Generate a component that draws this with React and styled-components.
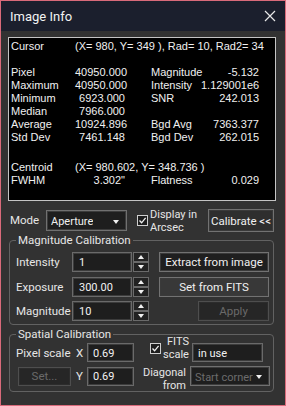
import React from 'react';
import styled, { createGlobalStyle } from 'styled-components';

const GlobalStyle = createGlobalStyle`
  html, body {
    margin: 0;
    padding: 0;
    background: #323232;
  }
  * {
    box-sizing: border-box;
  }
`;

const Check = () => (
  <svg width="9" height="9" viewBox="0 0 9 9">
    <path d="M1.5 4.5 L3.6 6.8 L7.6 1.8" fill="none" stroke="#f0f0f0" strokeWidth="1.3" />
  </svg>
);

const Arrow = ({ up, color = '#f0f0f0' }) => (
  <svg width="6" height="4" viewBox="0 0 6 4">
    <polygon points={up ? '0,4 6,4 3,0' : '0,0 6,0 3,4'} fill={color} />
  </svg>
);

const SpinBox = ({ value }) => (
  <>
    <NumInput>{value}</NumInput>
    <Spin>
      <SpinHalf><Arrow up /></SpinHalf>
      <SpinHalf><Arrow /></SpinHalf>
    </Spin>
  </>
);

const stats = [
  ['Pixel', '40950.000', 'Magnitude', '-5.132'],
  ['Maximum', '40950.000', 'Intensity', '1.129001e6'],
  ['Minimum', '6923.000', 'SNR', '242.013'],
  ['Median', '7966.000', '', ''],
  ['Average', '10924.896', 'Bgd Avg', '7363.377'],
  ['Std Dev', '7461.148', 'Bgd Dev', '262.015'],
];

const App = () => {
  return (
    <>
      <GlobalStyle />
      <Window>
        <TitleBar>
          <span>Image Info</span>
          <svg width="12" height="12" viewBox="0 0 12 12">
            <path d="M1 1 L11 11 M11 1 L1 11" stroke="#e8e8e8" strokeWidth="1.2" />
          </svg>
        </TitleBar>

        <Content>
          <InfoPanel>
            <InfoRow>
              <InfoLabel>Cursor</InfoLabel>
              <span>(X= 980, Y= 349 ), Rad= 10, Rad2= 34</span>
            </InfoRow>
            <InfoRow />
            {stats.map(([l1, v1, l2, v2]) => (
              <InfoRow key={l1}>
                <InfoLabel>{l1}</InfoLabel>
                <InfoValue>{v1}</InfoValue>
                <InfoLabel $second>{l2}</InfoLabel>
                <InfoValue $wide>{v2}</InfoValue>
              </InfoRow>
            ))}
            <InfoGap />
            <InfoRow>
              <InfoLabel>Centroid</InfoLabel>
              <span>(X= 980.602, Y= 348.736 )</span>
            </InfoRow>
            <InfoRow>
              <InfoLabel>FWHM</InfoLabel>
              <InfoValue>3.302"</InfoValue>
              <InfoLabel $second>Flatness</InfoLabel>
              <InfoValue $wide>0.029</InfoValue>
            </InfoRow>
          </InfoPanel>

          <ModeRow>
            <ModeLabel>Mode</ModeLabel>
            <Select $width={81} $height={21}>
              <span>Aperture</span>
              <Arrow />
            </Select>
            <CheckBox><Check /></CheckBox>
            <TwoLine>Display in<br />Arcsec</TwoLine>
            <Button $width={66} $height={23} $fill="#2e2e2e">Calibrate &lt;&lt;</Button>
          </ModeRow>

          <Group>
            <Legend>Magnitude Calibration</Legend>
            <CalRow>
              <FieldLabel $width={56}>Intensity</FieldLabel>
              <SpinBox value="1" />
              <Button $width={110} $height={20} $fill="#1f1f1f" $left={10}>Extract from image</Button>
            </CalRow>
            <CalRow>
              <FieldLabel $width={56}>Exposure</FieldLabel>
              <SpinBox value="300.00" />
              <Button $width={110} $height={20} $fill="#383838" $left={10}>Set from FITS</Button>
            </CalRow>
            <CalRow>
              <FieldLabel $width={56}>Magnitude</FieldLabel>
              <SpinBox value="10" />
              <Button $width={71} $height={20} $fill="#262626" $left={49} $disabled>Apply</Button>
            </CalRow>
          </Group>

          <Group $spatial>
            <Legend>Spatial Calibration</Legend>
            <SpatialGrid>
              <FieldLabel>Pixel scale</FieldLabel>
              <Axis>X</Axis>
              <TextBox>0.69</TextBox>
              <FitsCell>
                <CheckBox><Check /></CheckBox>
                <TwoLine $right>FITS<br />scale</TwoLine>
              </FitsCell>
              <TextBox $width={71} $left={2}>in use</TextBox>

              <Button $width={53} $height={19} $fill="#262626" $disabled>Set...</Button>
              <Axis>Y</Axis>
              <TextBox>0.69</TextBox>
              <DiagCell>
                <TwoLine $right>Diagonal<br />from</TwoLine>
              </DiagCell>
              <Select $width={80} $height={20} $disabled>
                <span>Start corner</span>
                <Arrow />
              </Select>
            </SpatialGrid>
          </Group>
        </Content>
      </Window>
    </>
  );
};

export default App;

const Window = styled.div`
  width: 286px;
  height: 406px;
  border: 1px solid #d96a7a;
  background: #323232;
  display: flex;
  flex-direction: column;
  font-family: Roboto, 'Liberation Sans', sans-serif;
  font-size: 11px;
  color: #e6e6e6;
  overflow: hidden;
`;

const TitleBar = styled.div`
  height: 30px;
  flex: none;
  background: #1b1f2d;
  display: flex;
  align-items: center;
  justify-content: space-between;
  padding: 0 9px 0 9px;
  font-size: 13px;
  color: #f2f2f2;
`;

const Content = styled.div`
  padding: 6px 9px 0 7px;
  display: flex;
  flex-direction: column;
`;

const InfoPanel = styled.div`
  height: 164px;
  background: #000;
  border: 1px solid #c4c4c4;
  padding: 2px 0 0 2px;
  font-family: 'Liberation Sans', Arial, sans-serif;
  font-size: 11px;
  color: #f0f0f0;
  display: flex;
  flex-direction: column;
`;

const InfoRow = styled.div`
  height: 13px;
  line-height: 13px;
  display: flex;
  white-space: nowrap;
`;

const InfoGap = styled.div`
  height: 17px;
`;

const InfoLabel = styled.span`
  width: ${(p) => (p.$second ? '50px' : '64px')};
  margin-left: ${(p) => (p.$second ? '26px' : '0')};
`;

const InfoValue = styled.span`
  width: ${(p) => (p.$wide ? '58px' : '50px')};
  text-align: right;
`;

const ModeRow = styled.div`
  margin-top: 8px;
  height: 23px;
  display: flex;
  align-items: center;
  padding-left: 2px;
`;

const ModeLabel = styled.span`
  width: 36px;
  font-size: 11.5px;
  padding-bottom: 2px;
`;

const Select = styled.div`
  width: ${(p) => p.$width}px;
  height: ${(p) => p.$height}px;
  background: #1e1e1e;
  border: 1px solid #707070;
  box-shadow: inset 0 0 0 1px #3c3c3c;
  display: flex;
  align-items: center;
  justify-content: space-between;
  padding: 2px 7px 0 4px;
  color: ${(p) => (p.$disabled ? '#6c6c6c' : '#f0f0f0')};
  white-space: nowrap;
  overflow: hidden;

  span {
    overflow: hidden;
  }
  svg {
    flex: none;
    margin-left: 3px;
  }
`;

const CheckBox = styled.span`
  width: 11px;
  height: 11px;
  flex: none;
  border: 1px solid #cfcfcf;
  background: #1e1e1e;
  display: flex;
  align-items: center;
  justify-content: center;
  margin-left: 10px;
`;

const TwoLine = styled.span`
  line-height: 13px;
  margin-left: 2px;
  font-size: 11px;
  text-align: ${(p) => (p.$right ? 'right' : 'left')};
  white-space: nowrap;
`;

const Button = styled.div`
  width: ${(p) => p.$width}px;
  height: ${(p) => p.$height}px;
  margin-left: ${(p) => (p.$left === undefined ? 'auto' : `${p.$left}px`)};
  margin-right: ${(p) => (p.$left === undefined ? '2px' : '0')};
  flex: none;
  background: ${(p) => p.$fill};
  border: 1px solid ${(p) => (p.$disabled ? '#4e4e4e' : '#727272')};
  box-shadow: inset 0 0 0 1px ${(p) => (p.$disabled ? '#2c2c2c' : '#3a3a3a')};
  color: ${(p) => (p.$disabled ? '#6a6a6a' : '#f0f0f0')};
  display: flex;
  align-items: center;
  justify-content: center;
  font-size: 11.5px;
  white-space: nowrap;
`;

const Group = styled.fieldset`
  margin: ${(p) => (p.$spatial ? '3px' : '2px')} 2px 0 1px;
  border: 1px solid #626262;
  border-radius: 4px;
  padding: ${(p) => (p.$spatial ? '2px 4px 5px 6px' : '5px 4px 3px 6px')};
  min-width: 0;
  display: flex;
  flex-direction: column;
  gap: 4.5px;
`;

const Legend = styled.legend`
  padding: 0 2px;
  line-height: 13px;
  font-size: 11.5px;
  color: #e6e6e6;
`;

const CalRow = styled.div`
  height: 20px;
  display: flex;
  align-items: center;
`;

const FieldLabel = styled.span`
  width: ${(p) => (p.$width ? `${p.$width}px` : 'auto')};
  font-size: 11.5px;
  white-space: nowrap;
`;

const NumInput = styled.div`
  width: 60px;
  height: 20px;
  background: #1e1e1e;
  border: 1px solid #6a6a6a;
  box-shadow: inset 0 0 0 1px #3c3c3c;
  padding: 1px 0 0 6px;
  display: flex;
  align-items: center;
  color: #f2f2f2;
`;

const Spin = styled.div`
  width: 16px;
  height: 20px;
  margin-left: 1px;
  display: flex;
  flex-direction: column;
`;

const SpinHalf = styled.div`
  height: 10px;
  background: #222;
  border: 1px solid #6a6a6a;
  display: flex;
  align-items: center;
  justify-content: center;
`;

const SpatialGrid = styled.div`
  display: grid;
  grid-template-columns: 57px 14px 47px 12px 44px auto;
  grid-template-rows: 19px 20px;
  row-gap: 4px;
  align-items: center;

  & > :nth-child(4),
  & > :nth-child(9) {
    grid-column: 4 / span 2;
  }
`;

const Axis = styled.span`
  padding-left: 3px;
  font-size: 11.5px;
`;

const TextBox = styled.div`
  width: ${(p) => (p.$width ? `${p.$width}px` : '47px')};
  height: 19px;
  margin-left: ${(p) => (p.$left ? `${p.$left}px` : '0')};
  background: #1e1e1e;
  border: 1px solid #6a6a6a;
  box-shadow: inset 0 0 0 1px #3c3c3c;
  padding: 1px 0 0 5px;
  display: flex;
  align-items: center;
  color: #f2f2f2;
`;

const FitsCell = styled.div`
  height: 28px;
  margin-top: -9px;
  display: flex;
  align-items: center;
  padding-left: 16px;
  padding-right: 3px;
  justify-content: space-between;

  ${CheckBox} {
    margin-left: 0;
  }
`;

const DiagCell = styled.div`
  height: 26px;
  margin-bottom: -6px;
  display: flex;
  align-items: center;
  justify-content: flex-end;
  padding-right: 4px;
`;
